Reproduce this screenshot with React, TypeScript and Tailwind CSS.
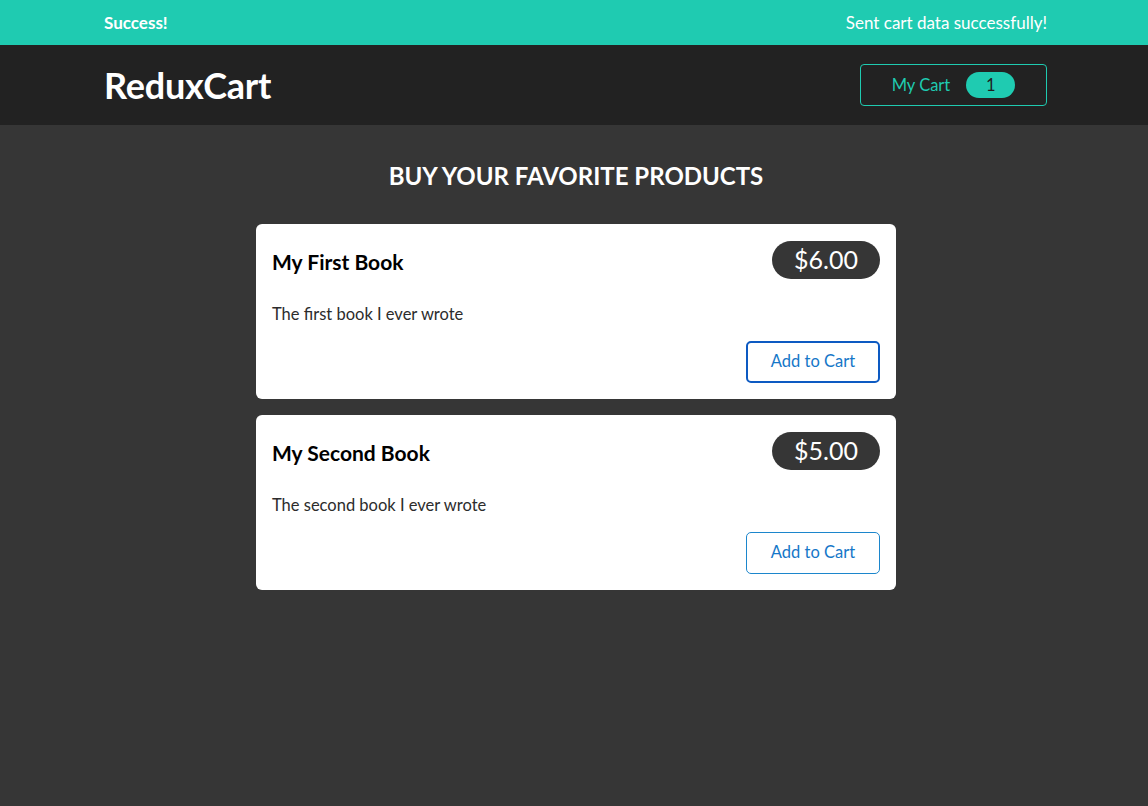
const products = [
  { id: 'p1', title: 'My First Book', price: 6, description: 'The first book I ever wrote', focused: true },
  { id: 'p2', title: 'My Second Book', price: 5, description: 'The second book I ever wrote', focused: false },
]

const ProductItem = ({ title, price, description, focused }: { title: string; price: number; description: string; focused: boolean }) => {
  return (
    <li className="bg-white rounded-[6px] px-4 pt-[17px] pb-[16px]">
      <header className="flex items-center justify-between">
        <h3 className="text-[21px] font-bold text-black pt-[4px]">{title}</h3>
        <div className="bg-[#363636] text-white text-[25px] rounded-full h-[38px] w-[108px] flex items-center justify-center">
          ${price.toFixed(2)}
        </div>
      </header>
      <p className="mt-[23px] text-[16.5px] text-[#2c2c2c]">{description}</p>
      <div className="flex justify-end mt-[14px]">
        <button
          className={
            focused
              ? 'h-[42px] w-[134px] rounded-[5px] border-2 border-[#0d5ac2] text-[#1577c8] text-[16.5px] bg-white'
              : 'h-[42px] w-[134px] rounded-[5px] border border-[#1c86cc] text-[#1577c8] text-[16.5px] bg-white'
          }
        >
          Add to Cart
        </button>
      </div>
    </li>
  )
}

export default function App() {
  return (
    <div className="min-h-[806px] bg-[#363636] font-['Lato','Noto_Sans',sans-serif]">
      {/* Notification */}
      <section className="h-[45px] bg-[#1fcbb1] pl-[104px] pr-[101px] flex items-center justify-between text-white text-[17px]">
        <h2 className="font-bold">Success!</h2>
        <p>Sent cart data successfully!</p>
      </section>

      {/* Header */}
      <header className="h-[80px] bg-[#222222] pl-[104px] pr-[101px] flex items-center justify-between">
        <h1 className="text-[36px] font-bold text-white tracking-[-0.2px]">ReduxCart</h1>
        <button className="h-[42px] w-[187px] rounded-[4px] border border-[#1fcbb1] flex items-center justify-center gap-4 text-[#1fcbb1] text-[16.5px]">
          <span>My Cart</span>
          <span className="bg-[#1fcbb1] text-[#1e1e1e] rounded-full w-[49px] h-[26px] flex items-center justify-center">1</span>
        </button>
      </header>

      {/* Products */}
      <main className="pt-[33px] pl-[4px]">
        <h2 className="text-center text-white text-[24px] font-bold">BUY YOUR FAVORITE PRODUCTS</h2>
        <ul className="w-[640px] mx-auto mt-[30px] flex flex-col gap-[16px]">
          {products.map((p) => (
            <ProductItem key={p.id} title={p.title} price={p.price} description={p.description} focused={p.focused} />
          ))}
        </ul>
      </main>
    </div>
  )
}
